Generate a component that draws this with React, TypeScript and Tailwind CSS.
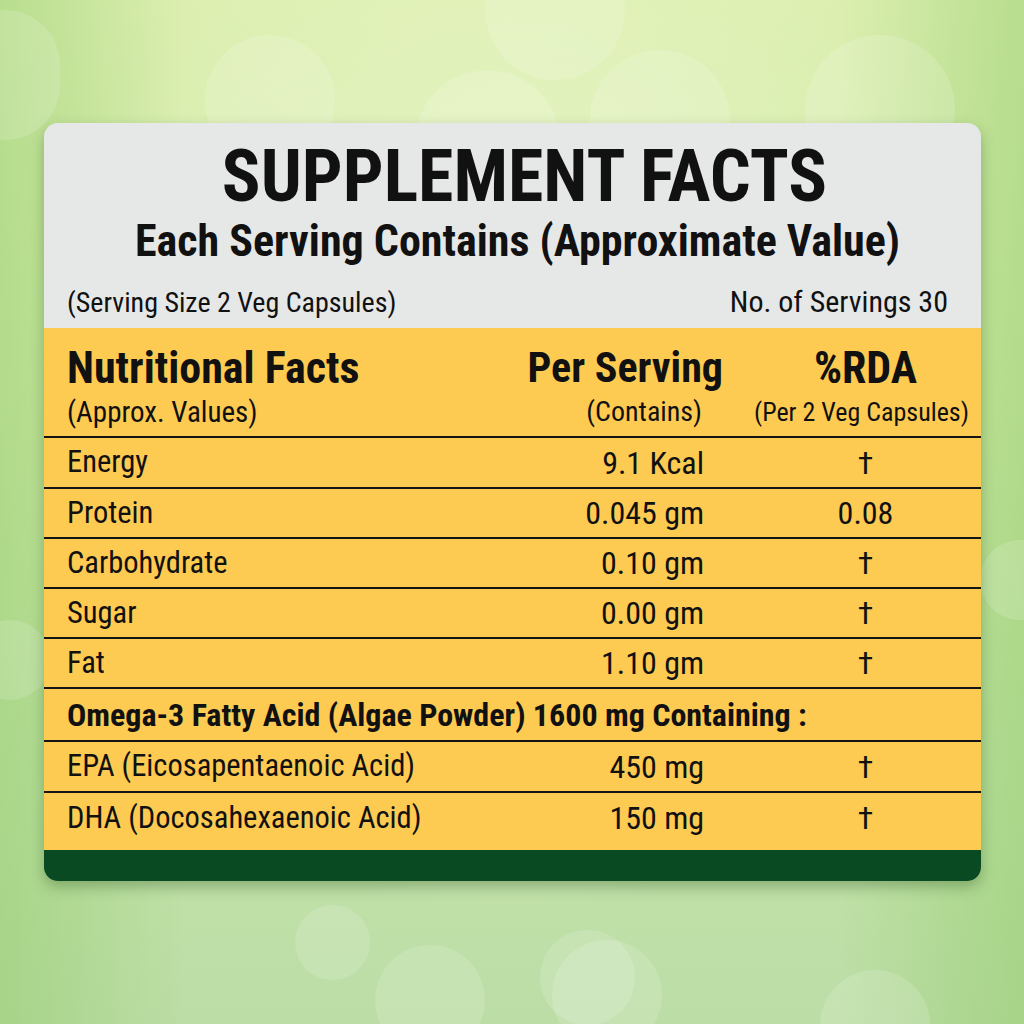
import type { ReactNode } from 'react'

const FONT = { fontFamily: '"Roboto Condensed", "DejaVu Sans Condensed", "Liberation Sans", sans-serif' }

type Row = { label: string; value: string; rda: string }

const ROWS: Row[] = [
  { label: 'Energy', value: '9.1 Kcal', rda: '†' },
  { label: 'Protein', value: '0.045 gm', rda: '0.08' },
  { label: 'Carbohydrate', value: '0.10 gm', rda: '†' },
  { label: 'Sugar', value: '0.00 gm', rda: '†' },
  { label: 'Fat', value: '1.10 gm', rda: '†' },
]

const OMEGA: Row[] = [
  { label: 'EPA (Eicosapentaenoic Acid)', value: '450 mg', rda: '†' },
  { label: 'DHA (Docosahexaenoic Acid)', value: '150 mg', rda: '†' },
]

const BUBBLES = [
  'left-[205px] top-[35px] w-[130px] h-[130px]',
  'left-[485px] top-[-60px] w-[140px] h-[140px]',
  'left-[415px] top-[70px] w-[145px] h-[145px]',
  'left-[805px] top-[35px] w-[150px] h-[150px]',
  'left-[590px] top-[50px] w-[140px] h-[140px]',
  'left-[-50px] top-[10px] w-[110px] h-[130px]',
  'left-[295px] top-[905px] w-[75px] h-[75px]',
  'left-[375px] top-[945px] w-[110px] h-[110px]',
  'left-[540px] top-[930px] w-[95px] h-[95px]',
  'left-[552px] top-[940px] w-[110px] h-[110px]',
  'left-[820px] top-[970px] w-[110px] h-[110px]',
  'left-[980px] top-[540px] w-[80px] h-[80px]',
  'left-[-30px] top-[620px] w-[80px] h-[80px]',
]

function Cells({ label, value, rda }: Row) {
  return (
    <div className="flex h-full items-center pl-[23px]">
      <div className="flex-1 whitespace-nowrap text-[30.5px]">{label}</div>
      <div className="w-[200px] text-right whitespace-nowrap text-[32px]">{value}</div>
      <div className="w-[46px]" />
      <div className="w-[231px] text-center text-[32px]">{rda}</div>
    </div>
  )
}

function Line({ h, children }: { h: string; children: ReactNode }) {
  return <div className={`${h} border-t-2 border-[#141414]`}>{children}</div>
}

export default function App() {
  return (
    <div
      className="relative w-[1024px] h-[1024px] overflow-hidden bg-[linear-gradient(180deg,#dcefb0_0%,#cfe9a8_45%,#c2e3a8_75%,#bcdda6_100%)]"
      style={FONT}
    >
      <div className="absolute inset-0 bg-[radial-gradient(ellipse_at_50%_35%,rgba(240,248,210,0.7)_0%,rgba(240,248,210,0)_60%)]" />
      <div className="absolute inset-0 bg-[linear-gradient(90deg,rgba(140,200,100,0.45)_0%,rgba(140,200,100,0)_18%,rgba(140,200,100,0)_82%,rgba(140,200,100,0.45)_100%)]" />
      {BUBBLES.map((b, i) => (
        <div key={i} className={`absolute rounded-full bg-white/15 ${b}`} />
      ))}

      <div className="relative pt-[123px] pl-[44px]">
        <div className="w-[937px] rounded-[14px] overflow-hidden shadow-[0_6px_14px_rgba(40,80,30,0.35)] text-[#111]">
          <div className="h-[205px] bg-[#e6e7e7] flex flex-col pt-[18px]">
            <div className="pl-[24px] text-center font-bold text-[72px] leading-none whitespace-nowrap">
              SUPPLEMENT FACTS
            </div>
            <div className="pl-[10px] text-center font-bold text-[44px] leading-none mt-[6px] whitespace-nowrap">
              Each Serving Contains (Approximate Value)
            </div>
            <div className="flex justify-between items-end pl-[23px] pr-[33px] text-[28px] leading-none mt-[24px] whitespace-nowrap">
              <span>(Serving Size 2 Veg Capsules)</span>
              <span className="text-[30px]">No. of Servings 30</span>
            </div>
          </div>

          <div className="bg-[#fdca52] leading-none">
            <div className="h-[108px] flex pl-[23px] pt-[18px]">
              <div className="flex-1">
                <div className="font-bold text-[44px] leading-none whitespace-nowrap">Nutritional Facts</div>
                <div className="text-[29px] leading-none mt-[8px] whitespace-nowrap">(Approx. Values)</div>
              </div>
              <div className="w-[200px] flex flex-col items-end">
                <div className="font-bold text-[42px] leading-none mr-[-19px] mt-[1px] whitespace-nowrap">Per Serving</div>
                <div className="text-[28px] leading-none mt-[9px] mr-[2px] whitespace-nowrap">(Contains)</div>
              </div>
              <div className="w-[46px]" />
              <div className="w-[231px] flex flex-col items-center">
                <div className="font-bold text-[44px] leading-none">%RDA</div>
                <div className="text-[26px] leading-none mt-[9px] mr-[8px] whitespace-nowrap">(Per 2 Veg Capsules)</div>
              </div>
            </div>

            {ROWS.map((r, i) => (
              <Line key={r.label} h={i === 0 ? 'h-[51px]' : 'h-[50px]'}>
                <Cells {...r} />
              </Line>
            ))}
            <Line h="h-[53px]">
              <div className="flex h-full items-center pl-[23px] font-bold text-[32px] whitespace-nowrap">
                Omega-3 Fatty Acid (Algae Powder) 1600 mg Containing :
              </div>
            </Line>
            {OMEGA.map((r, i) => (
              <Line key={r.label} h={i === 0 ? 'h-[51px]' : 'h-[59px]'}>
                <div className={i === 1 ? 'h-[50px]' : 'h-full'}>
                  <Cells {...r} />
                </div>
              </Line>
            ))}
          </div>
          <div className="h-[31px] bg-[#0a4a22]" />
        </div>
      </div>
    </div>
  )
}
